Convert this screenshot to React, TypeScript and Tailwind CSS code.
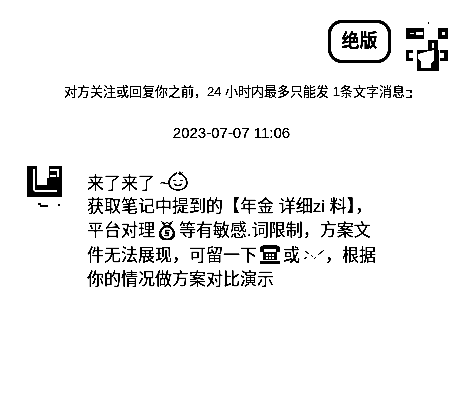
const cjk = "font-['Liberation_Sans','Noto_Sans_CJK_SC',sans-serif]";

const BadgeArt = () => (
  <svg width="45" height="52" viewBox="0 0 45 52" className="shrink-0">
    <path d="M23 2h1v2h-1zM1 8h18v11H1zM33 8h10v11H33zM23 20h10v12H23zM1 30h7v11H1zM35 30h8v11h-8zM12 30h22v21H12z" fill="#000" />
    <path d="M5 13h4v1H5zM11 12h7v3h-7zM37 12h3v3h-3zM27 23h2v5h-2zM4 33h4v5H4zM35 33h4v5h-4zM13 34l10-3 6-1v11l-3 3v4H16v-6l-3-3z" fill="#fff" />
  </svg>
);

const Avatar = () => (
  <div className="-mt-[4px] w-[60px] shrink-0">
    <svg width="36" height="42" viewBox="0 0 36 42">
      <path d="M0 0h10v19h10v-7h2V0h13v31H0z" fill="#000" />
      <path d="M3 3h3v20q0 3 3 3h21v-2H9q-1 0-1-2V3zM23 3h9v8h-2V5h-7zM23 9h6v2h-6z" fill="#fff" />
      <path d="M11 37h3v2h-3zM13 39h8v2h-8zM31 38h2v2h-2z" fill="#000" />
    </svg>
  </div>
);

const SmileIcon = () => (
  <svg width="20" height="21" viewBox="0 0 20 21" className="-ml-[2px] inline-block align-[-2px]">
    <path d="M9 3C5 5 1 9 1 13c0 4 4 7 9 7s9-3 9-7c0-4-4-8-7-10" fill="none" stroke="#000" strokeWidth="1.4" />
    <path d="M10 4l2-3 1 2 2-1-2 3" fill="#000" />
    <path d="M5 10h3v1H5zM12 10h3v1h-3z" fill="#000" />
    <path d="M6 14c2 2 6 2 8 0" fill="none" stroke="#000" strokeWidth="1.2" />
  </svg>
);

const MoneyBagIcon = () => (
  <svg width="16" height="19" viewBox="0 0 16 19" className="mx-[4px] inline-block align-[-4px]">
    <path d="M2 0l4 2 2-1 2 1 4-2-3 5c3 2 5 5 5 8 0 4-2 6-8 6s-8-2-8-6c0-3 2-6 5-8z" fill="#000" />
    <path d="M5 2l1 1 2-1 2 1 1-1-1 2H6z" fill="#fff" />
    <circle cx="8" cy="12" r="5.800" fill="#fff" />
    <path d="M10.500 9.500H6.500v2.500h3v2.500H5.500" fill="none" stroke="#000" strokeWidth="1.300" />
  </svg>
);

const PhoneIcon = () => (
  <svg width="20" height="19" viewBox="0 0 20 19" className="mx-[3px] inline-block align-[-3px]">
    <path d="M0 2l4-2h12l4 2v5h-4V4H4v3H0zM3 7h14v9h3v3H0v-3h3z" fill="#000" />
    <path d="M6 9h2v2H6zM9 9h2v2H9zM12 9h2v2h-2zM6 12h2v2H6zM9 12h2v2H9zM12 12h2v2h-2zM3 15h14v1H3z" fill="#fff" />
  </svg>
);

const MailIcon = () => (
  <svg width="25" height="14" viewBox="0 0 25 14" className="inline-block align-[-1px]">
    <path d="M5 3l4 3M11 7l2 2M24 2l-6 5M16 9l-2 2M4 11l3-2" fill="none" stroke="#000" strokeWidth="1" />
  </svg>
);

const CornerMark = () => (
  <svg width="6" height="10" viewBox="0 0 6 10" className="ml-[1px] inline-block align-[-3px]">
    <path d="M0 1h6v3H4V2H0zM0 8h4V6h2v3H0z" fill="#000" />
  </svg>
);

export default function App() {
  return (
    <div className={`h-[402px] w-[463px] overflow-hidden bg-white text-black brightness-75 contrast-[6] ${cjk}`}>
      <div className="flex items-start justify-end gap-[14px] pr-[13px] pt-[20px]">
        <div className="flex h-[43px] w-[63px] items-center justify-center rounded-[14px] border-[3px] border-black text-[18px] font-bold">
          绝版
        </div>
        <BadgeArt />
      </div>

      <p className="mt-[11px] pl-[64px] text-[13px] leading-[18px] whitespace-nowrap">
        对方关注或回复你之前，24 小时内最多只能发 1条文字消息
        <CornerMark />
      </p>

      <p className="mt-[22px] text-center text-[15px] leading-[20px]">2023-07-07 11:06</p>

      <div className="mt-[27px] flex pl-[27px]">
        <Avatar />
        <div className="w-[300px] text-[17px] leading-[24.5px] whitespace-nowrap">
          <div className="h-[24.5px]">来了来了 ~<SmileIcon /></div>
          <div className="h-[24.5px]">获取笔记中提到的【年金 详细zi 料】，</div>
          <div className="h-[24.5px]">平台对理<MoneyBagIcon />等有敏感.词限制，方案文</div>
          <div className="h-[24.5px]">件无法展现，可留一下<PhoneIcon />或<MailIcon />，根据</div>
          <div className="h-[25px]">你的情况做方案对比演示</div>
        </div>
      </div>
    </div>
  );
}
